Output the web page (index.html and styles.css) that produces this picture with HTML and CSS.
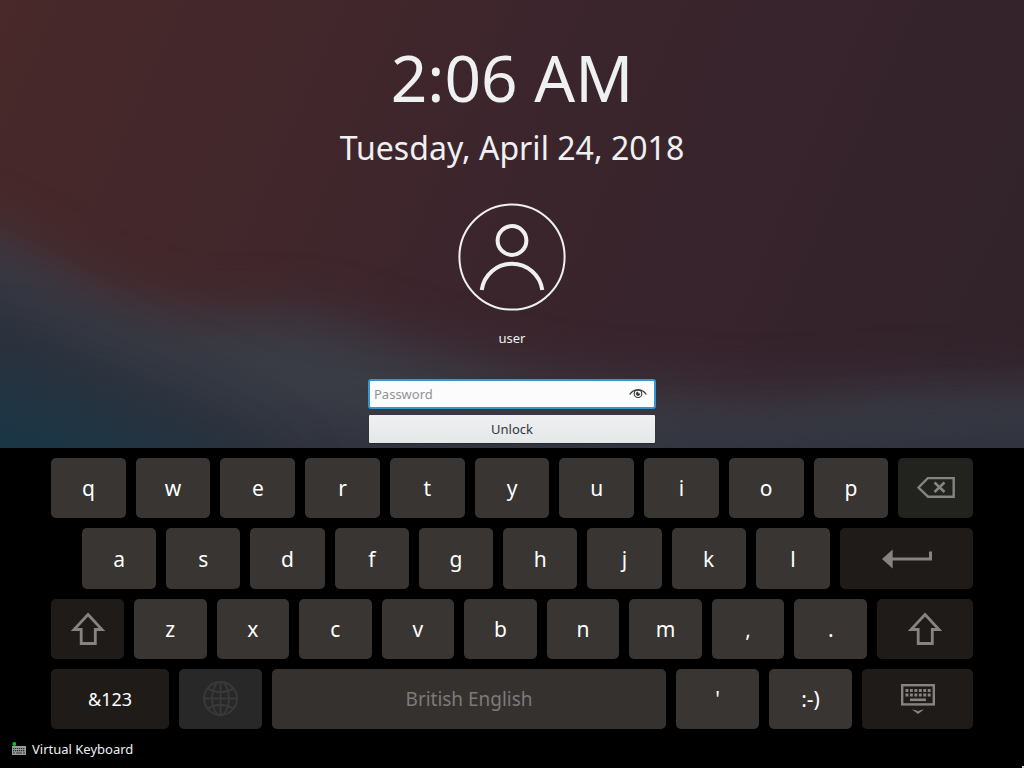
FILE: index.html
```html
<!DOCTYPE html>
<html lang="en">
<head>
<meta charset="utf-8">
<title>Lock screen</title>
<link rel="stylesheet" href="styles.css">
</head>
<body>
<div class="screen">
  <svg class="wallpaper" viewBox="0 0 1024 448" preserveAspectRatio="none" aria-hidden="true">
    <defs>
      <linearGradient id="base" gradientUnits="userSpaceOnUse" x1="0" y1="0" x2="930" y2="400">
        <stop offset="0" stop-color="#49292a"/>
        <stop offset=".28" stop-color="#42272b"/>
        <stop offset=".5" stop-color="#3c252c"/>
        <stop offset=".78" stop-color="#37242d"/>
        <stop offset="1" stop-color="#32222a"/>
      </linearGradient>
      <filter id="soft" x="-30%" y="-60%" width="160%" height="220%" color-interpolation-filters="sRGB"><feGaussianBlur stdDeviation="27"/></filter>
      <filter id="wide" x="-50%" y="-50%" width="200%" height="200%" color-interpolation-filters="sRGB"><feGaussianBlur stdDeviation="44"/></filter>
    </defs>
    <rect width="1024" height="448" fill="url(#base)"/>
    <path d="M-100 195L0 238L90 288L180 316L310 316L430 352L560 384L760 400L900 388L1130 385V620H-100Z" fill="#3a3d46" filter="url(#soft)"/>
    <path d="M-100 245L0 290L130 360L300 425L620 445L1130 420V620H-100Z" fill="#2e313c" filter="url(#soft)"/>
    <path d="M-150 370L0 385L110 425L250 490L250 620H-150Z" fill="#183646" filter="url(#wide)"/>
  </svg>

  <main class="lock">
    <div class="time">2:06 AM</div>
    <div class="date">Tuesday, April 24, 2018</div>
    <svg class="avatar" viewBox="0 0 108 108" fill="none" stroke="#eff0f1">
      <circle cx="54" cy="54" r="52.6" stroke-width="2"/>
      <circle cx="54" cy="37.5" r="14.4" stroke-width="4"/>
      <path d="M23.700 87a30.600 30.600 0 0 1 60.600 0" stroke-width="4"/>
    </svg>
    <div class="user">user</div>
    <div class="password">
      <span>Password</span>
      <svg class="eye" viewBox="0 0 18 12" fill="none" stroke="#31363b">
        <path d="M.7 6.500C4.600.3 13.400.3 17.300 6.500" stroke-width="1.300"/>
        <circle cx="9" cy="5.700" r="3.800" stroke-width="1.100"/>
        <path d="M9 4a1.800 1.800 0 1 0 1.800 1.800H9z" fill="#31363b" stroke-width=".7"/>
      </svg>
    </div>
    <div class="unlock">Unlock</div>
  </main>

  <section class="keyboard">
    <div class="row row-1">
      <div class="key">q</div><div class="key">w</div><div class="key">e</div><div class="key">r</div><div class="key">t</div><div class="key">y</div><div class="key">u</div><div class="key">i</div><div class="key">o</div><div class="key">p</div>
      <div class="key backspace">
        <svg width="38" height="22" viewBox="0 0 38 22" fill="none" stroke="#868482" stroke-width="2.400">
          <path d="M1.500 10.500L11 1H36.700V19.700H11Z"/><path d="M17.500 5.500L27.500 15M27.500 5.500L17.500 15" stroke-width="2.600"/>
        </svg>
      </div>
    </div>
    <div class="row row-2">
      <div class="key">a</div><div class="key">s</div><div class="key">d</div><div class="key">f</div><div class="key">g</div><div class="key">h</div><div class="key">j</div><div class="key">k</div><div class="key">l</div>
      <div class="key dark enter">
        <svg width="50" height="20" viewBox="0 0 50 20" fill="none" stroke="#868482">
          <path d="M10 10H48.500V2.500" stroke-width="3"/><path d="M0 10L10.700 .5V19.500Z" fill="#868482" stroke="none"/>
        </svg>
      </div>
    </div>
    <div class="row row-3">
      <div class="key dark shift-left">
        <svg width="34" height="33" viewBox="0 0 34 33" fill="none" stroke="#868482" stroke-width="2.800">
          <path d="M17 2.500L31 17.500H24.300V31.500H10.200V17.500H3Z"/>
        </svg>
      </div>
      <div class="key">z</div><div class="key">x</div><div class="key">c</div><div class="key">v</div><div class="key">b</div><div class="key">n</div><div class="key">m</div><div class="key">,</div><div class="key">.</div>
      <div class="key dark shift-right">
        <svg width="34" height="33" viewBox="0 0 34 33" fill="none" stroke="#868482" stroke-width="2.800">
          <path d="M17 2.500L31 17.500H24.300V31.500H10.200V17.500H3Z"/>
        </svg>
      </div>
    </div>
    <div class="row row-4">
      <div class="key dark symbols">&amp;123</div>
      <div class="key language">
        <svg width="36" height="36" viewBox="0 0 36 36" fill="none" stroke="#3b3938" stroke-width="1.900">
          <circle cx="17.500" cy="17.500" r="16.500"/><ellipse cx="17.500" cy="17.500" rx="8.500" ry="16.500"/>
          <path d="M17.500 1V34M1 17.500H34M4.500 7.500Q17.500 15 30.500 7.500M4.500 27.500Q17.500 20 30.500 27.500"/>
        </svg>
      </div>
      <div class="key space">British English</div>
      <div class="key">'</div>
      <div class="key smiley">:-)</div>
      <div class="key dark hide">
        <svg width="34" height="32" viewBox="0 0 34 32" fill="none" stroke="#868482">
          <rect x="1.200" y="2.200" width="31.600" height="19.200" stroke-width="2.400"/>
          <path d="M4.500 7.500H30M4.500 12H30" stroke-width="2.800" stroke-dasharray="2.900 1.550"/>
          <path d="M9 16.800H25" stroke-width="2.600"/>
          <path d="M11 26.500Q14.500 26.500 17 28.300Q19.500 26.500 23 26.500L17 31Z" fill="#868482" stroke="none"/>
        </svg>
      </div>
    </div>
  </section>

  <footer class="footer">
    <svg width="14" height="13" viewBox="0 0 14 13">
      <path d="M0 4H14V13H0Z" fill="#9a9c9b"/>
      <path d="M1 6.500H13M1 8.700H13" stroke="#252827" stroke-width="1.200" stroke-dasharray="1.300 .7"/>
      <path d="M1 11H3M4 11H10M11 11H13" stroke="#343736"/>
      <circle cx="2.300" cy="2" r="1.900" fill="#12c51c"/>
    </svg>
    <span>Virtual Keyboard</span>
    <i class="corner"></i>
  </footer>
</div>
</body>
</html>
```

FILE: styles.css
```css
* { box-sizing: border-box; }

body {
  margin: 0;
  overflow: hidden;
  background: #000;
  color: #eff0f1;
  font-family: "Noto Sans", sans-serif;
}

.screen {
  position: relative;
  display: flex;
  flex-direction: column;
  width: 1024px;
  height: 768px;
}

.wallpaper {
  position: absolute;
  inset: 0 0 auto;
  width: 1024px;
  height: 448px;
}

.lock {
  position: relative;
  display: flex;
  flex-direction: column;
  align-items: center;
  height: 448px;
  padding-top: 34px;
}

.time { font-size: 64px; line-height: 88px; }
.date { margin-top: 4px; font-size: 32px; line-height: 44px; letter-spacing: .03px; }
.avatar { width: 108px; height: 108px; margin-top: 33px; }
.user { margin-top: 18px; font-size: 13px; line-height: 18px; }

.password {
  display: flex;
  align-items: center;
  justify-content: space-between;
  width: 288px;
  height: 30px;
  margin-top: 32px;
  padding: 0 7px 0 4px;
  border: 2px solid #3298cf;
  border-radius: 3px;
  background: #fcfcfc;
  color: #909294;
  font-size: 13px;
  line-height: 18px;
}
.eye { width: 18px; height: 12px; }

.unlock {
  width: 286px;
  height: 28px;
  margin-top: 6px;
  border-radius: 1px;
  background: linear-gradient(#eff0f1, #e6e7e9);
  box-shadow: 0 1px 1px #252a32;
  color: #31363b;
  font-size: 13px;
  line-height: 28px;
  text-align: center;
}

.keyboard {
  display: grid;
  grid-template-rows: repeat(4, 1fr);
  gap: 10px;
  height: 281px;
  padding: 10px 51px 0;
}
.row { display: grid; gap: 10px; }
.row-1 { grid-template-columns: repeat(11, 1fr); }
.row-2 { grid-template-columns: repeat(9, 1fr) 133px; padding-left: 31px; }
.row-3 { grid-template-columns: 73px repeat(9, 1fr) 96px; }
.row-4 { grid-template-columns: 118px 83px 394px 83px 83px 111px; }

.key {
  display: flex;
  align-items: center;
  justify-content: center;
  min-width: 0;
  border-radius: 5px;
  background: #383533;
  color: #fff;
  font-size: 21px;
  line-height: 30px;
}
.row-2 .key { padding-top: 1px; }
.dark { background: #1f1b19; }
.enter { padding-left: 1px; }
.backspace { background: #22221e; }
.language { background: #282828; }
.symbols { font-size: 18px; }
.space { background: #35312f; color: #7c7a79; font-size: 19px; letter-spacing: -.03px; }

.footer {
  display: flex;
  align-items: center;
  gap: 6px;
  height: 39px;
  padding-left: 12px;
  font-size: 13px;
  line-height: 18px;
}
.corner {
  align-self: flex-end;
  width: 2px;
  height: 2px;
  margin-left: auto;
  background: #d8d8d8;
}
```
